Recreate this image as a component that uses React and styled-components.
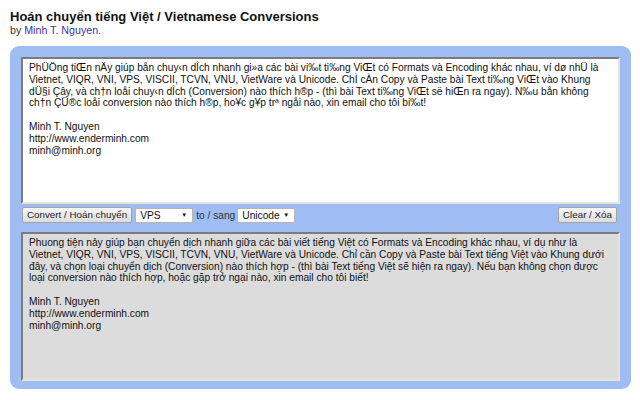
import React from "react";
import styled, { createGlobalStyle } from "styled-components";

const GlobalStyle = createGlobalStyle`
  body {
    margin: 0;
    background: #fff;
    font-family: "Liberation Sans", Arial, sans-serif;
  }
`;

const Page = styled.div`
  width: 640px;
  box-sizing: border-box;
  padding: 9px 9px 0 10px;
`;

const Title = styled.h1`
  margin: 0;
  font-size: 13px;
  line-height: 15px;
  font-weight: bold;
  color: #111;
`;

const ByLine = styled.div`
  font-size: 10.67px;
  line-height: 12px;
  color: #333;

  a {
    color: #3d33a8;
    text-decoration: none;
  }
`;

const Panel = styled.div`
  margin-top: 10px;
  background: #9fbdf3;
  border-radius: 9px;
  padding: 11px 11px 8px;
  display: flex;
  flex-direction: column;
`;

const TextBox = styled.textarea`
  display: block;
  width: 100%;
  height: ${props => props.$height}px;
  box-sizing: border-box;
  margin: 0;
  padding: 3px 6px;
  border: 2px solid;
  border-color: #7c7c7c #e6e4d8 #e6e4d8 #7c7c7c;
  background: ${props => props.$bg};
  color: #111;
  font-family: "Liberation Sans", Arial, sans-serif;
  font-size: 10.2px;
  line-height: 11.8px;
  resize: none;
  overflow: hidden;
  white-space: pre;
  outline: none;
`;

const Toolbar = styled.div`
  display: flex;
  align-items: center;
  height: 16px;
  margin: 3px 3px 9px 1px;
`;

const Button = styled.button`
  height: 16px;
  box-sizing: border-box;
  margin: 0;
  padding: 0 4px;
  border: 1px solid #a3a3a3;
  border-radius: 2px;
  background: linear-gradient(#f7f7f7, #dddddd);
  color: #222;
  font-family: "Liberation Sans", Arial, sans-serif;
  font-size: 9.8px;
  line-height: 14px;
  cursor: pointer;
`;

const Dropdown = styled.div`
  width: 58px;
  height: 15px;
  box-sizing: border-box;
  margin-left: ${props => props.$gap}px;
  padding: 0 5px 0 4px;
  display: flex;
  align-items: center;
  justify-content: space-between;
  background: #fff;
  border: 1px solid #b5b5b5;
  color: #111;
  font-size: 10.2px;
`;

const Arrow = styled.span`
  font-size: 6px;
  color: #111;
`;

const Label = styled.span`
  margin: 0 2px 0 3px;
  font-size: 10.2px;
  color: #333;
`;

const Spacer = styled.div`
  flex: 1;
`;

const sourceText = [
  "PhÜÖng tiŒn nÄy giúp bån chuy‹n dÎch nhanh gi»a các bài vi‰t ti‰ng ViŒt có Formats và Encoding khác nhau, ví dø nhÜ là",
  "Vietnet, VIQR, VNI, VPS, VISCII, TCVN, VNU, VietWare và Unicode. ChÌ cÀn Copy và Paste bài Text ti‰ng ViŒt vào Khung",
  "dÜ§i Çây, và ch†n loåi chuy‹n dÎch (Conversion) nào thích h®p - (thì bài Text ti‰ng ViŒt së hiŒn ra ngay). N‰u bån không",
  "ch†n ÇÜ®c loåi conversion nào thích h®p, ho¥c g¥p trª ngåi nào, xin email cho tôi bi‰t!",
  "",
  "Minh T. Nguyen",
  "http://www.enderminh.com",
  "minh@minh.org",
].join("\n");

const resultText = [
  "Phuong tiện nảy giúp bạn chuyển dịch nhanh giữa các bài viết tiếng Việt có Formats và Encoding khác nhau, ví dụ như là",
  "Vietnet, VIQR, VNI, VPS, VISCII, TCVN, VNU, VietWare và Unicode. Chỉ cần Copy và Paste bài Text tiếng Việt vào Khung dưới",
  "đây, và chọn loại chuyển dịch (Conversion) nào thích hợp - (thì bài Text tiếng Việt sẽ hiện ra ngay). Nếu bạn không chọn được",
  "loại conversion nào thích hợp, hoặc gặp trở ngại nào, xin email cho tôi biết!",
  "",
  "Minh T. Nguyen",
  "http://www.enderminh.com",
  "minh@minh.org",
].join("\n");

const App = () => {
  return (
    <>
      <GlobalStyle />
      <Page>
        <Title>Hoán chuyển tiếng Việt / Vietnamese Conversions</Title>
        <ByLine>
          by <a href="#">Minh T. Nguyen.</a>
        </ByLine>
        <Panel>
          <TextBox $height={147} $bg="#fff" wrap="off" spellCheck={false} defaultValue={sourceText} />
          <Toolbar>
            <Button>Convert / Hoán chuyển</Button>
            <Dropdown $gap={3}>
              VPS <Arrow>▼</Arrow>
            </Dropdown>
            <Label>to / sang</Label>
            <Dropdown $gap={0}>
              Unicode <Arrow>▼</Arrow>
            </Dropdown>
            <Spacer />
            <Button>Clear / Xóa</Button>
          </Toolbar>
          <TextBox $height={149} $bg="#dcdcdc" wrap="off" spellCheck={false} defaultValue={resultText} />
        </Panel>
      </Page>
    </>
  );
};

export default App;
